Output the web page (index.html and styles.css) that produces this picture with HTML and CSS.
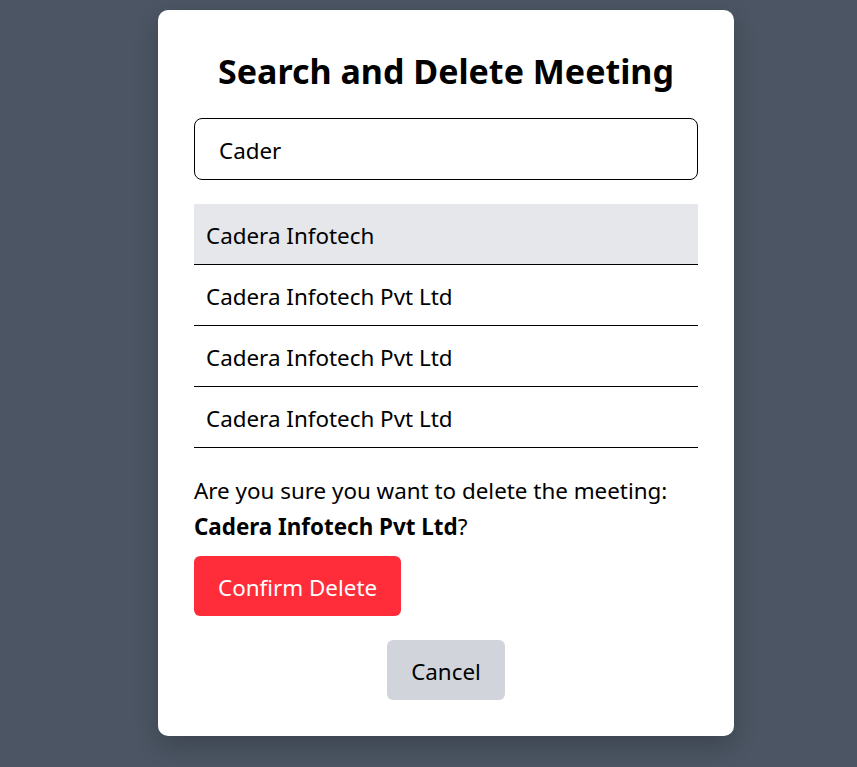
FILE: index.html
```html
<!DOCTYPE html>
<html lang="en">
<head>
<meta charset="utf-8">
<title>Search and Delete Meeting</title>
<link rel="stylesheet" href="styles.css">
</head>
<body>
<div class="modal">
  <h2 class="title">Search and Delete Meeting</h2>
  <div class="search">Cader</div>
  <ul class="results">
    <li class="result active">Cadera Infotech</li>
    <li class="result">Cadera Infotech Pvt Ltd</li>
    <li class="result">Cadera Infotech Pvt Ltd</li>
    <li class="result">Cadera Infotech Pvt Ltd</li>
  </ul>
  <p class="confirm-text">Are you sure you want to delete the meeting: <strong>Cadera Infotech Pvt Ltd</strong>?</p>
  <button class="btn btn-danger">Confirm Delete</button>
  <div class="actions">
    <button class="btn btn-cancel">Cancel</button>
  </div>
</div>
</body>
</html>
```
FILE: styles.css
```css
* { box-sizing: border-box; }
html, body { margin: 0; padding: 0; }
body {
  background: #4b5563;
  font-family: "Noto Sans", "Open Sans", sans-serif;
  color: #000;
  min-height: 767px;
  padding-top: 10px;
}
.modal {
  width: 576px;
  margin-left: 158px;
  background: #fff;
  border-radius: 10px;
  padding: 36px;
  box-shadow: 0 10px 25px rgba(0,0,0,0.2);
}
.title {
  margin: 0 0 24px;
  padding-top: 2px;
  font-size: 34px;
  line-height: 46px;
  font-weight: 700;
  text-align: center;
}
.search {
  border: 1px solid #000;
  border-radius: 8px;
  padding: 18px 24px 14px;
  font-size: 22.4px;
  line-height: 28px;
}
.results {
  list-style: none;
  margin: 24px 0 0;
  padding: 0;
}
.result {
  padding: 18px 12px 14px;
  font-size: 22.4px;
  line-height: 28px;
  border-bottom: 1px solid #000;
}
.result.active { background: #e5e7eb; }
.confirm-text {
  margin: 25px 0 11px;
  font-size: 22.4px;
  line-height: 36px;
}
.btn {
  font-family: inherit;
  font-size: 22.4px;
  line-height: 28px;
  border: 0;
  border-radius: 6px;
  padding: 18px 24px 14px;
  cursor: pointer;
}
.btn-danger {
  background: #ff2d3a;
  color: #fff;
}
.actions {
  display: flex;
  justify-content: center;
  margin-top: 24px;
}
.btn-cancel {
  background: #d1d5db;
  color: #000;
}
```
